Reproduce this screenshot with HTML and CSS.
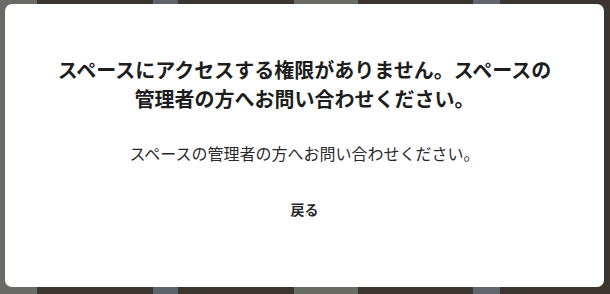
FILE: index.html
```html
<!DOCTYPE html>
<html lang="ja">
<head>
<meta charset="utf-8">
<link rel="stylesheet" href="styles.css">
</head>
<body>
<div class="backdrop">
  <div class="modal">
    <h1 class="title">スペースにアクセスする権限がありません。スペースの管理者の方へお問い合わせください。</h1>
    <p class="desc">スペースの管理者の方へお問い合わせください。</p>
    <button class="back" type="button">戻る</button>
  </div>
</div>
</body>
</html>
```

FILE: styles.css
```css
html, body {
  margin: 0;
  padding: 0;
  width: 610px;
  height: 294px;
  overflow: hidden;
}
body {
  font-family: "Noto Sans CJK JP", "Noto Sans", sans-serif;
}
.backdrop {
  box-sizing: border-box;
  width: 610px;
  height: 294px;
  padding: 4px 6px 7px 5px;
  background: linear-gradient(to right,
    #6a6a66 0, #6a6a66 37px,
    #3a362f 37px, #3a362f 153px,
    #5f6468 153px, #5f6468 178px,
    #3a362f 178px, #3a362f 294px,
    #6b6b66 294px, #6b6b66 358px,
    #3a362f 358px, #3a362f 473px,
    #62666a 473px, #62666a 500px,
    #3a362f 500px, #3a362f 610px);
}
.modal {
  box-sizing: border-box;
  height: 283px;
  background: #fff;
  border-radius: 7px;
  padding: 51px 48px 0;
  display: flex;
  flex-direction: column;
  align-items: center;
  text-align: center;
}
.title {
  margin: 0;
  font-size: 20px;
  line-height: 29px;
  font-weight: 700;
  color: #1d1d1d;
}
.desc {
  margin: 28px 0 0;
  font-size: 16px;
  line-height: 24px;
  color: #2a2a2a;
}
.back {
  margin-top: 26px;
  height: 36px;
  padding: 0 16px;
  border: none;
  background: transparent;
  font-family: inherit;
  font-size: 14px;
  font-weight: 700;
  color: #2a2a2a;
  cursor: pointer;
}
```
